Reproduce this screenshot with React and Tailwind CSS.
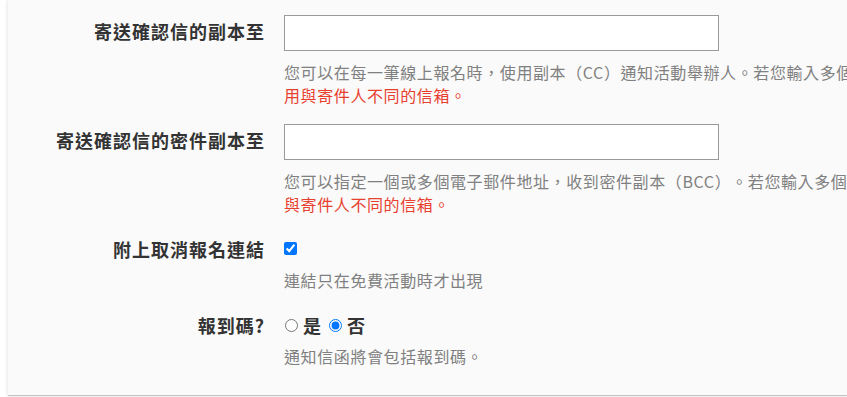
import React from 'react';

const font = { fontFamily: '"Noto Sans CJK TC", "Noto Sans", sans-serif' };

// full-width punctuation keeps a full cell, as in the original rendering
const Text = ({ children }) => {
  const parts = [];
  let buf = '';
  [...children].forEach((ch, i) => {
    if ('，。（）'.includes(ch)) {
      if (buf) parts.push(buf);
      buf = '';
      parts.push(
        <span key={i} className={`inline-block w-[16.6px] ${'（）'.includes(ch) ? 'text-center' : 'text-left'}`}>
          {ch}
        </span>
      );
    } else {
      buf += ch;
    }
  });
  if (buf) parts.push(buf);
  return <>{parts}</>;
};

const Label = ({ children }) => (
  <div className="text-right text-[18px] tracking-[1px] font-bold text-[#333] leading-[28px] pt-[2px] whitespace-nowrap">
    {children}
  </div>
);

const Help = ({ className = '', children }) => (
  <div className={`text-[16px] tracking-[0.6px] leading-[23px] text-[#808080] whitespace-nowrap ${className}`}>
    {children}
  </div>
);

const EmailRow = ({ label, lines }) => (
  <>
    <Label>{label}</Label>
    <div className="mb-[17px]">
      <input
        type="text"
        className="block w-[435px] h-[36px] bg-white border border-[#9a9a9a] px-2 outline-none"
      />
      <Help className="mt-[10px]">
        <div><Text>{lines[0]}</Text></div>
        <div className="text-[#e8402f]"><Text>{lines[1]}</Text></div>
      </Help>
    </div>
  </>
);

export default function App() {
  return (
    <div className="bg-white w-[847px] h-[397px] overflow-hidden" style={font}>
      <div className="ml-[8px] bg-[#fafafa] border-b border-[#c4c4c4] shadow-[0_0_4px_rgba(0,0,0,0.15)] pt-[15px] pb-[27px]">
        <div className="grid grid-cols-[257px_1fr] gap-x-[19px]">
          <EmailRow
            label="寄送確認信的副本至"
            lines={[
              '您可以在每一筆線上報名時，使用副本（CC）通知活動舉辦人。若您輸入多個電子郵件地址，請以逗號分隔，並請使',
              '用與寄件人不同的信箱。',
            ]}
          />
          <EmailRow
            label="寄送確認信的密件副本至"
            lines={[
              '您可以指定一個或多個電子郵件地址，收到密件副本（BCC）。若您輸入多個電子郵件地址，請以逗號分隔，並請使用',
              '與寄件人不同的信箱。',
            ]}
          />

          <Label>附上取消報名連結</Label>
          <div className="mb-[17px]">
            <div className="h-[36px] pt-[9px]">
              <input type="checkbox" defaultChecked className="block m-0 w-[13px] h-[13px] accent-[#0075ff]" />
            </div>
            <Help>連結只在免費活動時才出現</Help>
          </div>

          <Label>報到碼?</Label>
          <div>
            <div className="h-[32px] flex items-center text-[18px] font-bold text-[#333]">
              <input type="radio" name="code" className="m-0 ml-[1px] w-[13px] h-[13px]" />
              <span className="ml-[5px]">是</span>
              <input type="radio" name="code" defaultChecked className="m-0 ml-[8px] w-[13px] h-[13px] accent-[#0075ff]" />
              <span className="ml-[5px]">否</span>
            </div>
            <Help className="mt-[4px]"><Text>通知信函將會包括報到碼。</Text></Help>
          </div>
        </div>
      </div>
    </div>
  );
}
